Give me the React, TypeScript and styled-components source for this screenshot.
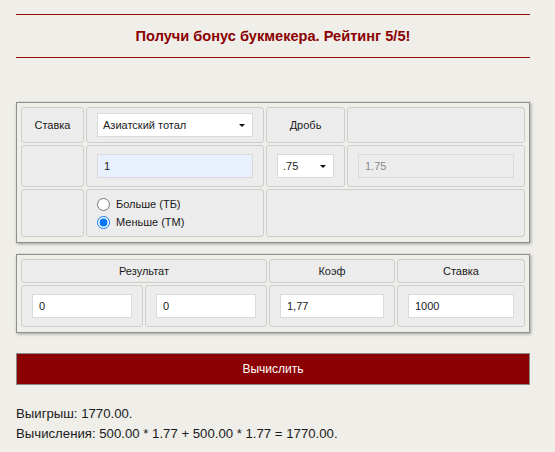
import styled, { createGlobalStyle } from "styled-components";

const GlobalStyle = createGlobalStyle`
  body {
    margin: 8px;
    background: #efeee9;
    font-family: "Liberation Sans", Arial, sans-serif;
    color: #1a1a1a;
  }
`;

const Page = styled.div`
  width: 514px;
  padding: 6px 8px 0;
`;

const Banner = styled.div`
  border-top: 1px solid #9b0a0a;
  border-bottom: 1px solid #9b0a0a;
  height: 42px;
  line-height: 42px;
  text-align: center;
  font-size: 14.6px;
  font-weight: bold;
  color: #8b0000;
`;

const Panel = styled.div<{ $cols: string; $rows: string; $top: number }>`
  margin-top: ${({ $top }) => $top}px;
  border: 1px solid #8f8f8f;
  box-shadow: 1px 1px 3px rgba(0, 0, 0, 0.35);
  padding: 4px 4px 5px;
  display: grid;
  grid-template-columns: ${({ $cols }) => $cols};
  grid-template-rows: ${({ $rows }) => $rows};
  gap: 2px;
`;

const Cell = styled.div<{ $span?: number }>`
  grid-column: span ${({ $span }) => $span || 1};
  background: #ececec;
  border: 1px solid #cdcdcd;
  border-radius: 3px;
  padding: 0 10px;
  display: flex;
  flex-direction: column;
  justify-content: center;
  align-items: stretch;
  font-size: 11px;
  box-sizing: border-box;
`;

const HeadCell = styled(Cell)`
  align-items: center;
  text-align: center;
`;

const Field = styled.input<{ $tint?: string }>`
  box-sizing: border-box;
  width: 100%;
  height: 24px;
  border: 1px solid #dadada;
  background: ${({ $tint }) => $tint || "#fff"};
  padding: 0 6px;
  font: 11px "Liberation Sans", Arial, sans-serif;
  color: #1a1a1a;
  outline: none;
  &:disabled {
    background: #ececec;
    color: #8a8a8a;
  }
`;

const SelectBox = styled.div`
  position: relative;
  width: 100%;
`;

const Select = styled.select`
  appearance: none;
  box-sizing: border-box;
  width: 100%;
  height: 24px;
  border: 1px solid #dadada;
  background: #fff;
  padding: 0 5px;
  font: 11px "Liberation Sans", Arial, sans-serif;
  color: #1a1a1a;
  outline: none;
`;

const Caret = styled.span`
  position: absolute;
  right: 8px;
  top: 11px;
  width: 0;
  height: 0;
  border-left: 3px solid transparent;
  border-right: 3px solid transparent;
  border-top: 3px solid #111;
  pointer-events: none;
`;

const RadioRow = styled.label`
  display: flex;
  align-items: center;
  height: 18px;
  font-size: 11px;
  input {
    margin: 0 6px 0 0;
    width: 13px;
    height: 13px;
  }
`;

const Button = styled.button`
  display: block;
  margin-top: 20px;
  width: 100%;
  height: 32px;
  background: #8b0000;
  border: 1px solid #8a8a8a;
  color: #fff;
  font: 12px "Liberation Sans", Arial, sans-serif;
  cursor: pointer;
`;

const Result = styled.div`
  margin-top: 19px;
  font-size: 13.2px;
  line-height: 20px;
`;

const Dropdown = ({ value, options }: { value: string; options: string[] }) => (
  <SelectBox>
    <Select defaultValue={value}>
      {options.map((o) => (
        <option key={o}>{o}</option>
      ))}
    </Select>
    <Caret />
  </SelectBox>
);

export default function App() {
  return (
    <>
      <GlobalStyle />
      <Page>
        <Banner>Получи бонус букмекера. Рейтинг 5/5!</Banner>

        <Panel $top={44} $cols="63px 178px 79px 1fr" $rows="36px 42px 48px">
          <HeadCell>Ставка</HeadCell>
          <Cell>
            <Dropdown value="Азиатский тотал" options={["Азиатский тотал", "Азиатская фора"]} />
          </Cell>
          <HeadCell>Дробь</HeadCell>
          <Cell />

          <Cell />
          <Cell>
            <Field defaultValue="1" $tint="#e8f0fe" />
          </Cell>
          <Cell>
            <Dropdown value=".75" options={[".0", ".25", ".5", ".75"]} />
          </Cell>
          <Cell>
            <Field value="1.75" disabled readOnly />
          </Cell>

          <Cell />
          <Cell>
            <RadioRow>
              <input type="radio" name="side" />
              Больше (ТБ)
            </RadioRow>
            <RadioRow>
              <input type="radio" name="side" defaultChecked />
              Меньше (ТМ)
            </RadioRow>
          </Cell>
          <Cell $span={2} />
        </Panel>

        <Panel $top={11} $cols="122px 122px 126px 1fr" $rows="24px 42px">
          <HeadCell $span={2}>Результат</HeadCell>
          <HeadCell>Коэф</HeadCell>
          <HeadCell>Ставка</HeadCell>
          <Cell>
            <Field defaultValue="0" />
          </Cell>
          <Cell>
            <Field defaultValue="0" />
          </Cell>
          <Cell>
            <Field defaultValue="1,77" />
          </Cell>
          <Cell>
            <Field defaultValue="1000" />
          </Cell>
        </Panel>

        <Button>Вычислить</Button>

        <Result>
          <div>Выигрыш: 1770.00.</div>
          <div>Вычисления: 500.00 * 1.77 + 500.00 * 1.77 = 1770.00.</div>
        </Result>
      </Page>
    </>
  );
}
